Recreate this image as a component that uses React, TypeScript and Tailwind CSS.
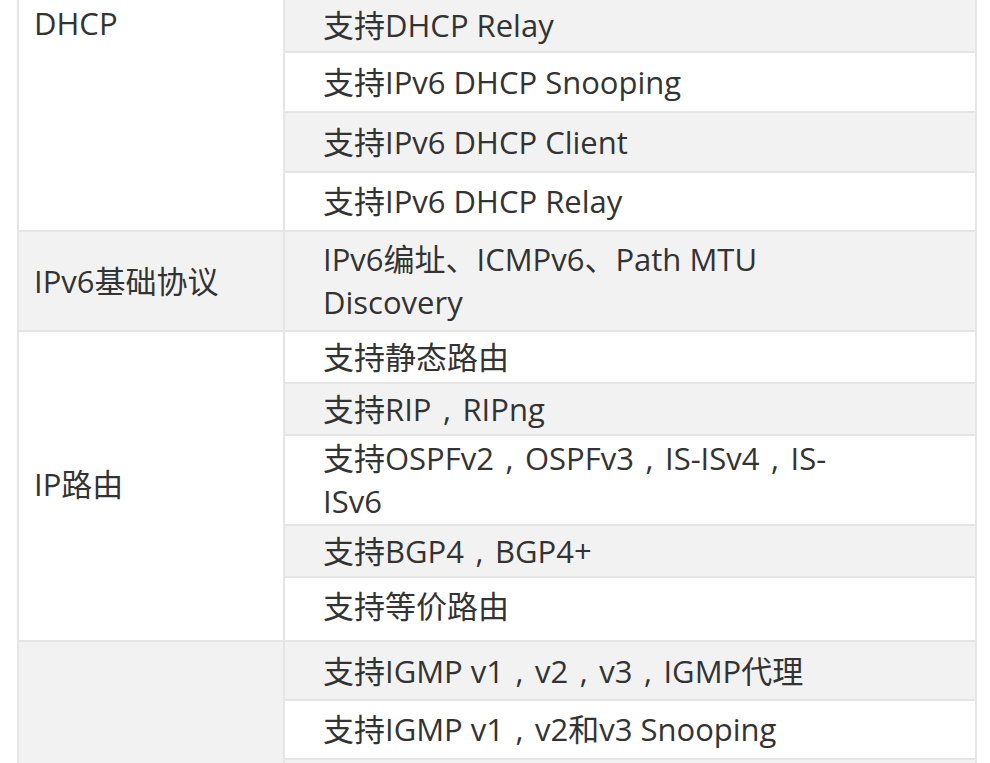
import React from "react";

type Row = { lines: React.ReactNode[]; h: string; gray: boolean };

const font = { fontFamily: '"Open Sans", "Noto Sans CJK SC", sans-serif' };

function C() {
  return <span className="inline-block w-[1em] text-center">,</span>;
}

function Right({ rows }: { rows: Row[] }) {
  return (
    <div className="flex flex-1 flex-col">
      {rows.map((r, i) => (
        <div
          key={i}
          className={`flex ${r.h} items-center pl-[38px] ${r.gray ? "bg-[#f2f2f2]" : "bg-white"} ${
            i < rows.length - 1 ? "border-b-2 border-[#e5e5e5]" : ""
          }`}
        >
          <div className="whitespace-nowrap leading-[43px]">
            {r.lines.map((l, j) => (
              <div key={j}>{l}</div>
            ))}
          </div>
        </div>
      ))}
    </div>
  );
}

export default function App() {
  return (
    <div className="h-[763px] w-[990px] overflow-hidden bg-white text-[31px] text-[#333333]" style={font}>
      <div className="ml-[17px] w-[960px] border-x-2 border-[#e5e5e5]">
        {/* DHCP */}
        <div className="flex border-b-2 border-[#e5e5e5]">
          <div className="w-[266px] shrink-0 border-r-2 border-[#e5e5e5] bg-white pl-[15px] pt-[2px] leading-[43px]">
            DHCP
          </div>
          <Right
            rows={[
              { lines: ["支持DHCP Relay"], h: "h-[53px]", gray: true },
              { lines: ["支持IPv6 DHCP Snooping"], h: "h-[60px]", gray: false },
              { lines: ["支持IPv6 DHCP Client"], h: "h-[60px]", gray: true },
              { lines: ["支持IPv6 DHCP Relay"], h: "h-[57px]", gray: false },
            ]}
          />
        </div>
        {/* IPv6 */}
        <div className="flex border-b-2 border-[#e5e5e5]">
          <div className="flex w-[266px] shrink-0 items-center border-r-2 border-[#e5e5e5] bg-[#f2f2f2] pl-[15px] leading-[43px]">
            IPv6基础协议
          </div>
          <Right
            rows={[
              {
                lines: ["IPv6编址、ICMPv6、Path MTU", "Discovery"],
                h: "h-[98px]",
                gray: true,
              },
            ]}
          />
        </div>
        {/* IP routing */}
        <div className="flex border-b-2 border-[#e5e5e5]">
          <div className="flex w-[266px] shrink-0 items-center border-r-2 border-[#e5e5e5] bg-white pb-[4px] pl-[15px] leading-[43px]">
            IP路由
          </div>
          <Right
            rows={[
              { lines: ["支持静态路由"], h: "h-[52px]", gray: false },
              { lines: [<>支持RIP<C />RIPng</>], h: "h-[52px]", gray: true },
              {
                lines: [<>支持OSPFv2<C />OSPFv3<C />IS-ISv4<C />IS-</>, "ISv6"],
                h: "h-[90px]",
                gray: false,
              },
              { lines: [<>支持BGP4<C />BGP4+</>], h: "h-[52px]", gray: true },
              { lines: ["支持等价路由"], h: "h-[62px] pb-[6px]", gray: false },
            ]}
          />
        </div>
        {/* Multicast */}
        <div className="flex">
          <div className="w-[266px] shrink-0 border-r-2 border-[#e5e5e5] bg-[#f2f2f2]" />
          <Right
            rows={[
              { lines: [<>支持IGMP v1<C />v2<C />v3<C />IGMP代理</>], h: "h-[59px] pt-[2px]", gray: true },
              { lines: [<>支持IGMP v1<C />v2和v3 Snooping</>], h: "h-[59px]", gray: false },
              { lines: [""], h: "h-[57px]", gray: true },
            ]}
          />
        </div>
      </div>
    </div>
  );
}
